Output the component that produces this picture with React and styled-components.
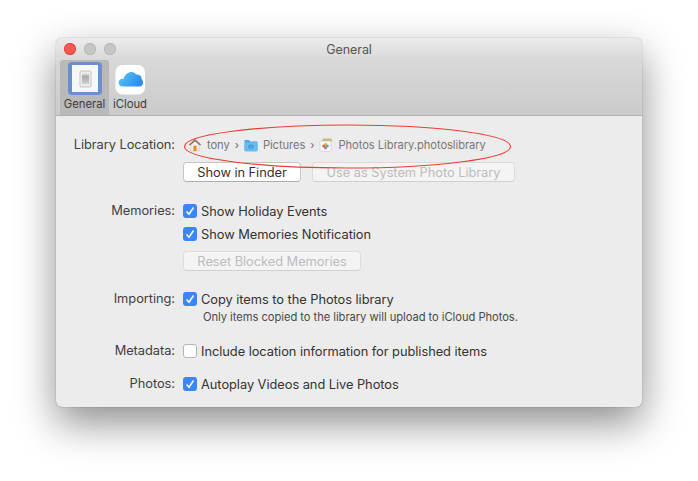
import React from "react";
import styled, { createGlobalStyle } from "styled-components";

const GlobalStyle = createGlobalStyle`
  html, body {
    margin: 0;
    background: #ffffff;
    overflow: hidden;
  }
  body {
    font-family: Inter, "Liberation Sans", sans-serif;
    -webkit-font-smoothing: antialiased;
  }
`;

const Page = styled.div`
  width: 698px;
  height: 481px;
  padding: 38px 0 0 56px;
  box-sizing: border-box;
`;

const Window = styled.div`
  position: relative;
  width: 586px;
  height: 369px;
  border-radius: 6px;
  background: #ececec;
  box-shadow: 0 0 1px rgba(0, 0, 0, 0.55), 0 16px 40px rgba(0, 0, 0, 0.45);
  overflow: hidden;
`;

const Toolbar = styled.div`
  height: 78px;
  box-sizing: border-box;
  background: linear-gradient(#ebebeb, #d8d8d8 30%, #cbcbcb);
  border-bottom: 1px solid #b1b1b1;
`;

const TitleBar = styled.div`
  position: relative;
  display: flex;
  align-items: center;
  justify-content: center;
  height: 22px;
  font-size: 12.5px;
  letter-spacing: -0.05px;
  color: #555555;
`;

const Lights = styled.div`
  position: absolute;
  left: 8px;
  top: 5px;
  display: flex;
  gap: 8px;
`;

const Light = styled.span`
  width: 12px;
  height: 12px;
  border-radius: 50%;
  background: ${(p) => p.$color};
  box-shadow: inset 0 0 0 1px ${(p) => p.$edge};
`;

const Tabs = styled.div`
  display: flex;
  padding-left: 4px;
`;

const Tab = styled.div`
  display: flex;
  flex-direction: column;
  align-items: center;
  gap: 1px;
  width: ${(p) => p.$width}px;
  height: 55px;
  box-sizing: border-box;
  padding-top: 2px;
  border-radius: 3px 3px 0 0;
  background: ${(p) => (p.$active ? "#b9b9b9" : "transparent")};
  font-size: 11.3px;
  letter-spacing: -0.05px;
  color: #3c3c3c;
`;

const TabIcon = styled.svg`
  display: block;
  width: 34px;
  height: 34px;
`;

const Form = styled.div`
  display: grid;
  grid-template-columns: 119px 1fr;
  column-gap: 8px;
  font-size: 12.85px;
  letter-spacing: -0.05px;
  color: #333333;
  padding-top: 19px;
`;

const Label = styled.div`
  text-align: right;
  height: 20px;
  line-height: 20px;
  margin-top: ${(p) => p.$top || 0}px;
  color: #3f3f3f;
`;

const Controls = styled.div`
  display: flex;
  flex-direction: column;
  align-items: flex-start;
  margin-top: ${(p) => p.$top || 0}px;
`;

const Path = styled.div`
  display: flex;
  align-items: center;
  height: 20px;
  font-size: 11.15px;
  color: #777777;
  margin-left: 5px;
`;

const PathItem = styled.span`
  display: flex;
  align-items: center;
  gap: 5px;
`;

const Chevron = styled.span`
  margin: 0 5px;
  font-size: 11px;
  color: #6a6a6a;
`;

const ButtonRow = styled.div`
  display: flex;
  gap: 11px;
  margin-top: ${(p) => p.$top || 0}px;
`;

const Button = styled.div`
  display: flex;
  align-items: center;
  justify-content: center;
  width: ${(p) => p.$width}px;
  height: 20px;
  box-sizing: border-box;
  border-radius: 4px;
  background: ${(p) => (p.$disabled ? "#f4f4f4" : "#ffffff")};
  border: 1px solid ${(p) => (p.$disabled ? "#dcdcdc" : "#c6c6c6")};
  border-bottom-color: ${(p) => (p.$disabled ? "#d0d0d0" : "#adadad")};
  color: ${(p) => (p.$disabled ? "#bcbcbc" : "#333333")};
  margin-top: ${(p) => p.$top || 0}px;
`;

const CheckRow = styled.div`
  display: flex;
  align-items: center;
  gap: 4px;
  height: 20px;
  margin-top: ${(p) => p.$top || 0}px;
`;

const Box = styled.span`
  display: flex;
  align-items: center;
  justify-content: center;
  width: 14px;
  height: 14px;
  box-sizing: border-box;
  border-radius: 3px;
  background: ${(p) => (p.$on ? "#3b86f7" : "#ffffff")};
  border: ${(p) => (p.$on ? "none" : "1px solid #b4b4b4")};
`;

const Note = styled.div`
  margin: 1px 0 0 20px;
  font-size: 11.2px;
  line-height: 14px;
  color: #4a4a4a;
`;

const Annotation = styled.svg`
  position: absolute;
  left: 125px;
  top: 83px;
  pointer-events: none;
`;

const Check = ({ on, children, top }) => (
  <CheckRow $top={top}>
    <Box $on={on}>
      {on && (
        <svg width="10" height="10" viewBox="0 0 10 10">
          <path d="M1.6 5.4 L4 8.2 L8.5 1.5" fill="none" stroke="#fff" strokeWidth="1.5" />
        </svg>
      )}
    </Box>
    {children}
  </CheckRow>
);

const HomeIcon = () => (
  <svg width="14" height="14" viewBox="0 0 14 14">
    <path d="M2.8 7 L7 3 L11.2 7 V13 H2.8 Z" fill="#f3efe8" stroke="#c4bfb5" strokeWidth="0.5" />
    <path d="M7 1 L13.2 6.8 L12 7.6 L7 3.2 L2 7.6 L0.8 6.8 Z" fill="#8f6f5f" />
    <rect x="5.4" y="7.8" width="3.2" height="5.2" fill="#e88a26" />
  </svg>
);

const FolderIcon = () => (
  <svg width="14" height="13" viewBox="0 0 14 13">
    <path d="M0.5 2 Q0.5 1 1.5 1 H5 L6.2 2.4 H12.5 Q13.5 2.4 13.5 3.4 V11.2 Q13.5 12.2 12.5 12.2 H1.5 Q0.5 12.2 0.5 11.2 Z" fill="#4fa6e2" />
    <rect x="0.5" y="3.6" width="13" height="8.6" rx="1" fill="#68bdf0" />
    <rect x="4.6" y="5.8" width="4.8" height="3.8" rx="0.6" fill="#3f93cf" />
    <circle cx="7" cy="7.7" r="1" fill="#68bdf0" />
  </svg>
);

const PhotosIcon = () => (
  <svg width="14" height="14" viewBox="0 0 14 14">
    <rect x="4" y="0.4" width="8.6" height="2" fill="#e6b77a" />
    <rect x="3" y="1.6" width="10" height="2" fill="#a7c47a" />
    <rect x="1" y="3" width="11" height="10.4" rx="1" fill="#fafafa" stroke="#bdbdbd" strokeWidth="0.5" />
    <circle cx="6.5" cy="6.2" r="1.5" fill="#f0b232" />
    <circle cx="8.3" cy="8" r="1.5" fill="#5ba3dc" />
    <circle cx="6.5" cy="9.8" r="1.5" fill="#b86ac0" />
    <circle cx="4.7" cy="8" r="1.5" fill="#e25b47" />
    <circle cx="6.5" cy="8" r="0.9" fill="#7fbf5f" />
  </svg>
);

export default function App() {
  return (
    <>
      <GlobalStyle />
      <Page>
        <Window>
          <Toolbar>
            <TitleBar>
              <Lights>
                <Light $color="#fc5753" $edge="#df4744" />
                <Light $color="#c6c6c6" $edge="#b8b8b8" />
                <Light $color="#c6c6c6" $edge="#b8b8b8" />
              </Lights>
              General
            </TitleBar>
            <Tabs>
              <Tab $active $width={49}>
                <TabIcon viewBox="0 0 34 34">
                  <defs>
                    <linearGradient id="lever" x1="0" y1="0" x2="0" y2="1">
                      <stop offset="0" stopColor="#f2f2f2" />
                      <stop offset="0.3" stopColor="#a8a8a8" />
                      <stop offset="1" stopColor="#d0d0d0" />
                    </linearGradient>
                  </defs>
                  <rect x="0" y="0" width="34" height="33" rx="4" fill="#6a8fd0" />
                  <rect x="4" y="3" width="26" height="27" fill="#f7f7f7" />
                  <rect x="12" y="9" width="11" height="16" rx="1" fill="#ececec" stroke="#c4c4c4" />
                  <rect x="14" y="11" width="7" height="11" fill="url(#lever)" />
                </TabIcon>
                General
              </Tab>
              <Tab $width={42}>
                <TabIcon viewBox="0 0 34 34">
                  <defs>
                    <linearGradient id="cloud" x1="0" y1="0" x2="1" y2="0.4">
                      <stop offset="0" stopColor="#5cc8f5" />
                      <stop offset="1" stopColor="#2f8cf0" />
                    </linearGradient>
                  </defs>
                  <rect x="2.5" y="3" width="29.5" height="29.5" rx="7" fill="#ffffff" />
                  <path d="M10 24.5 C6 24.5 5 21 6 19 C7 17 9 16.6 10.5 17 C12 11 19 7.5 23 12.5 C27 12 29 15 28.6 17 C31 19 30.6 24.5 26.5 24.5 Z" fill="url(#cloud)" />
                </TabIcon>
                iCloud
              </Tab>
            </Tabs>
          </Toolbar>
          <Form>
            <Label>Library Location:</Label>
            <Controls>
              <Path>
                <PathItem><HomeIcon />tony</PathItem>
                <Chevron>›</Chevron>
                <PathItem><FolderIcon />Pictures</PathItem>
                <Chevron>›</Chevron>
                <PathItem><PhotosIcon />Photos Library.photoslibrary</PathItem>
              </Path>
              <ButtonRow $top={7}>
                <Button $width={118}>Show in Finder</Button>
                <Button $disabled $width={203}>Use as System Photo Library</Button>
              </ButtonRow>
            </Controls>
            <Label $top={19}>Memories:</Label>
            <Controls $top={19}>
              <Check on>Show Holiday Events</Check>
              <Check on top={3}>Show Memories Notification</Check>
              <Button $disabled $width={178} $top={7}>Reset Blocked Memories</Button>
            </Controls>
            <Label $top={18}>Importing:</Label>
            <Controls $top={18}>
              <Check on>Copy items to the Photos library</Check>
              <Note>Only items copied to the library will upload to iCloud Photos.</Note>
            </Controls>
            <Label $top={17}>Metadata:</Label>
            <Controls $top={17}>
              <Check>Include location information for published items</Check>
            </Controls>
            <Label $top={13}>Photos:</Label>
            <Controls $top={13}>
              <Check on>Autoplay Videos and Live Photos</Check>
            </Controls>
          </Form>
          <Annotation width="332" height="50" viewBox="0 0 332 50">
            <ellipse cx="166.5" cy="25.5" rx="163" ry="21.5" fill="none" stroke="#ee3b32" strokeWidth="1.1" />
          </Annotation>
        </Window>
      </Page>
    </>
  );
}
